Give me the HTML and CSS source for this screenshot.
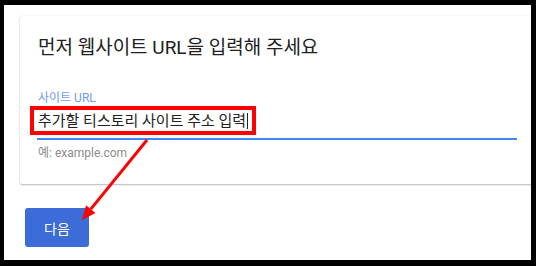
FILE: index.html
```html
<!DOCTYPE html>
<html lang="ko">
<head>
<meta charset="utf-8">
<link rel="stylesheet" href="styles.css">
</head>
<body>
<div class="frame">
  <section class="card">
    <h1 class="title">먼저 웹사이트 URL을 입력해 주세요</h1>
    <div class="field">
      <label class="label">사이트 URL</label>
      <div class="input"><span class="value">추가할 티스토리 사이트 주소 입력</span><span class="caret"></span></div>
      <div class="hint">예: example.com</div>
    </div>
  </section>
  <button class="next">다음</button>
</div>
<svg class="overlay" width="536" height="266" viewBox="0 0 536 266" xmlns="http://www.w3.org/2000/svg">
  <rect x="32" y="108" width="222" height="25" fill="none" stroke="#ff0000" stroke-width="4"/>
  <line x1="147" y1="140" x2="90.8" y2="209.1" stroke="#ff0000" stroke-width="3"/>
  <polygon points="82,220 86.1,205.3 95.5,212.9" fill="#ff0000"/>
</svg>
</body>
</html>
```
FILE: styles.css
```css
html, body {
  margin: 0;
  padding: 0;
}
body {
  background: #000;
  width: 536px;
  height: 266px;
  overflow: hidden;
  position: relative;
  font-family: Roboto, "Noto Sans CJK KR", sans-serif;
}
.frame {
  margin: 5px 5px 6px 4px;
  height: 255px;
  background: #fff;
  overflow: hidden;
  padding: 11px 0 0 16px;
  box-sizing: border-box;
}
.card {
  background: #fff;
  border-radius: 2px;
  box-shadow: 0 1px 2px rgba(0,0,0,0.28), 0 0 1px rgba(0,0,0,0.18);
  margin-right: -10px;
  height: 168px;
  box-sizing: border-box;
  padding: 20px 0 0 17px;
}
.title {
  margin: 0;
  font-size: 19px;
  line-height: 24px;
  font-weight: 400;
  color: #212121;
  padding-left: 1px;
}
.field {
  width: 480px;
  margin-top: 31px;
}
.label {
  display: block;
  font-size: 12px;
  line-height: 14px;
  color: #6f9bf0;
  padding-left: 1px;
}
.input {
  display: flex;
  align-items: center;
  height: 35px;
  border-bottom: 2px solid #4285f4;
  padding: 0 0 2px 1px;
  box-sizing: border-box;
}
.value {
  font-size: 15px;
  line-height: 20px;
  color: #222;
}
.caret {
  width: 1px;
  height: 16px;
  background: #222;
  margin-left: 1px;
}
.hint {
  font-size: 12px;
  line-height: 14px;
  color: #8c8c8c;
  margin-top: 6px;
  padding-left: 1px;
}
.next {
  display: block;
  margin: 24px 0 0 5px;
  width: 64px;
  height: 39px;
  border: none;
  border-radius: 3px;
  background: #3b6cd8;
  color: #fff;
  font-family: Roboto, "Noto Sans CJK KR", sans-serif;
  font-size: 14px;
  padding: 0;
}
.overlay {
  position: absolute;
  left: 0;
  top: 0;
}
```
